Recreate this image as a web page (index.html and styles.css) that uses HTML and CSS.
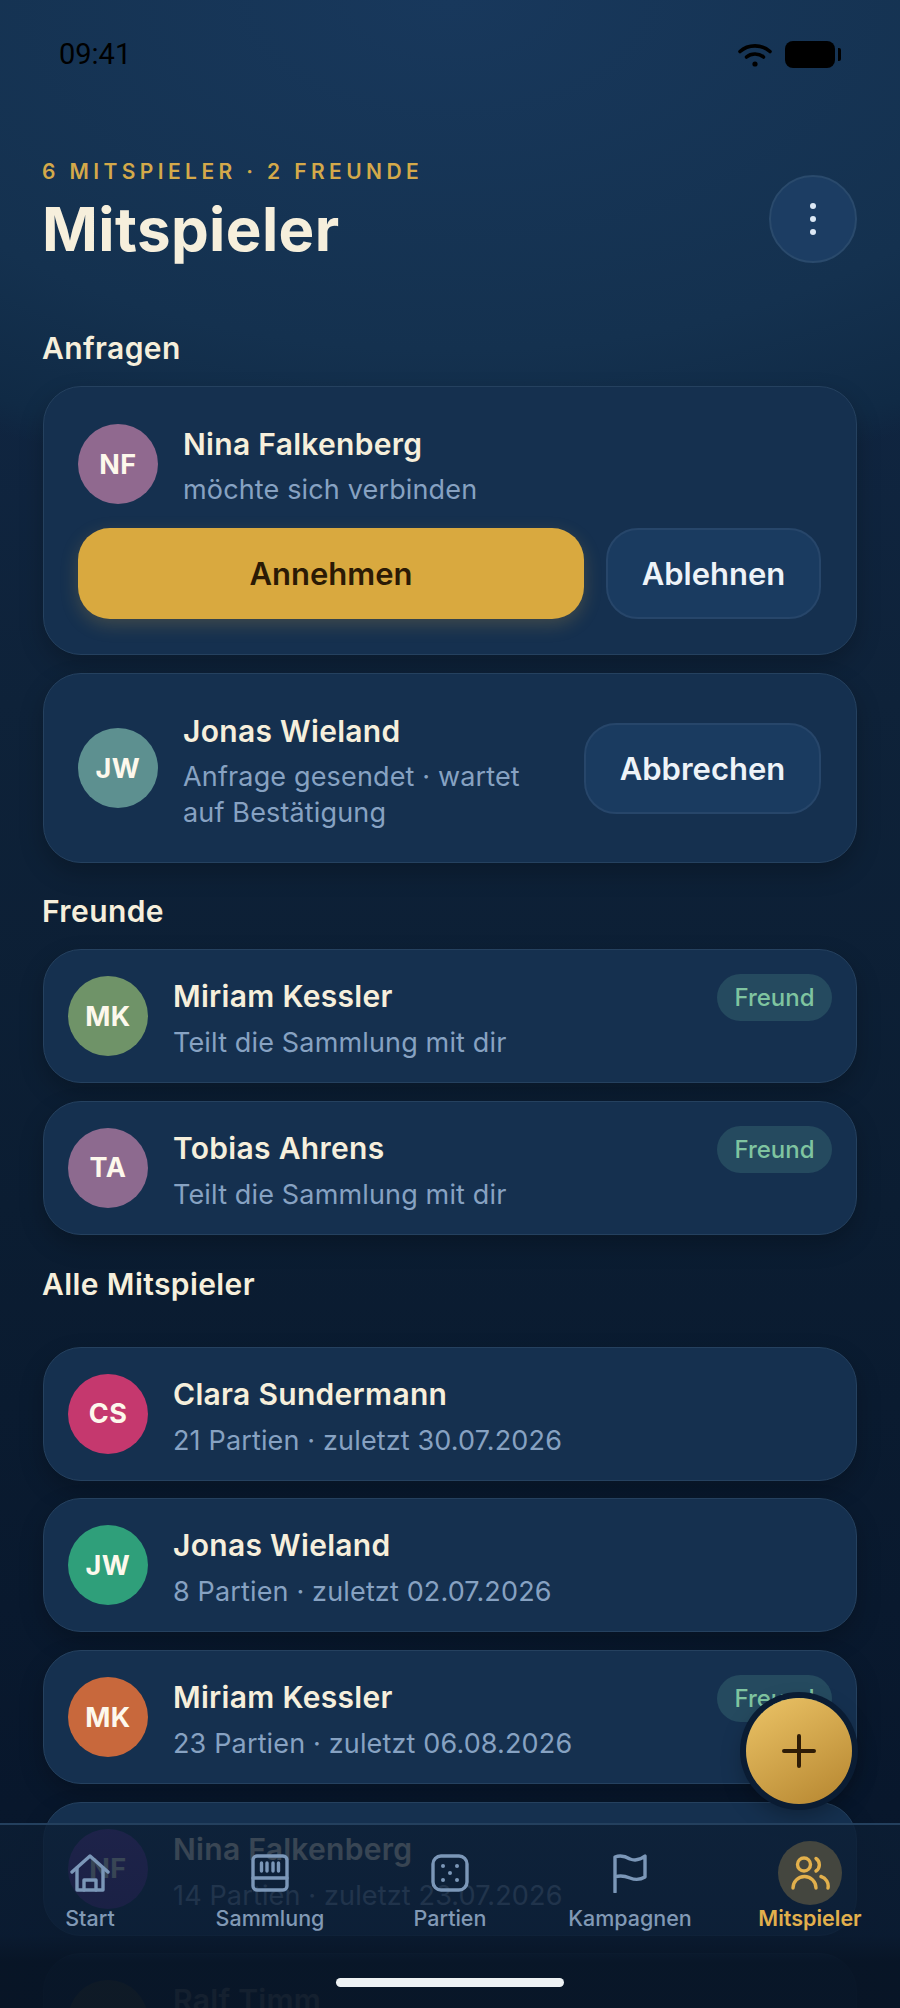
FILE: index.html
```html
<!DOCTYPE html>
<html lang="de">
<head>
  <meta charset="UTF-8" />
  <title>Mitspieler</title>
  <link rel="stylesheet" href="styles.css">
</head>
<body>
  <div class="statusbar">
    <span class="clock">09:41</span>
    <div class="status-icons">
      <svg class="wifi" viewBox="0 0 34 24" fill="none" stroke="#000" stroke-width="3.6" stroke-linecap="round">
        <path d="M2 8.5C10 1 24 1 32 8.5" />
        <path d="M8.5 14C13 10 21 10 25.5 14" />
        <circle cx="17" cy="21" r="2.6" fill="#000" stroke="none" />
      </svg>
      <div class="battery"></div>
      <div class="battery-nub"></div>
    </div>
  </div>

  <header class="top">
    <div>
      <div class="eyebrow">6 MITSPIELER · 2 FREUNDE</div>
      <h1>Mitspieler</h1>
    </div>
    <button class="menu-btn"><i></i><i></i><i></i></button>
  </header>

  <h2 class="first">Anfragen</h2>

  <div class="card request">
    <div class="request-head">
      <div class="avatar nf">NF</div>
      <div class="info">
        <div class="name">Nina Falkenberg</div>
        <div class="sub">möchte sich verbinden</div>
      </div>
    </div>
    <div class="request-actions">
      <button class="btn primary">Annehmen</button>
      <button class="btn ghost decline">Ablehnen</button>
    </div>
  </div>

  <div class="card pending">
    <div class="avatar jw">JW</div>
    <div class="info">
      <div class="name">Jonas Wieland</div>
      <div class="sub">Anfrage gesendet · wartet<br>auf Bestätigung</div>
    </div>
    <button class="btn ghost cancel">Abbrechen</button>
  </div>

  <h2>Freunde</h2>

  <div class="list">
    <div class="card row">
      <div class="avatar mk">MK</div>
      <div class="info">
        <div class="name">Miriam Kessler</div>
        <div class="sub">Teilt die Sammlung mit dir</div>
      </div>
      <span class="pill">Freund</span>
    </div>
    <div class="card row">
      <div class="avatar ta">TA</div>
      <div class="info">
        <div class="name">Tobias Ahrens</div>
        <div class="sub">Teilt die Sammlung mit dir</div>
      </div>
      <span class="pill">Freund</span>
    </div>
  </div>

  <h2 class="all">Alle Mitspieler</h2>

  <div class="list">
    <div class="card row">
      <div class="avatar cs">CS</div>
      <div class="info">
        <div class="name">Clara Sundermann</div>
        <div class="sub">21 Partien · zuletzt 30.07.2026</div>
      </div>
    </div>
    <div class="card row">
      <div class="avatar jw2">JW</div>
      <div class="info">
        <div class="name">Jonas Wieland</div>
        <div class="sub">8 Partien · zuletzt 02.07.2026</div>
      </div>
    </div>
    <div class="card row">
      <div class="avatar mk2">MK</div>
      <div class="info">
        <div class="name">Miriam Kessler</div>
        <div class="sub">23 Partien · zuletzt 06.08.2026</div>
      </div>
      <span class="pill">Freund</span>
    </div>
    <div class="card row">
      <div class="avatar nf2">NF</div>
      <div class="info">
        <div class="name">Nina Falkenberg</div>
        <div class="sub">14 Partien · zuletzt 23.07.2026</div>
      </div>
    </div>
    <div class="card row">
      <div class="avatar rt">RT</div>
      <div class="info">
        <div class="name">Ralf Timm</div>
        <div class="sub">5 Partien · zuletzt 11.06.2026</div>
      </div>
    </div>
  </div>

  <button class="fab">
    <svg viewBox="0 0 34 34" width="34" height="34" fill="none" stroke="#2e1c06" stroke-width="4" stroke-linecap="round">
      <path d="M2 17H32M17 2V32" />
    </svg>
  </button>

  <nav class="tabbar">
    <div class="tab">
      <div class="tab-icon">
        <svg viewBox="0 0 40 40" width="40" height="40" fill="none" stroke="currentColor" stroke-width="3.4" stroke-linejoin="round" stroke-linecap="round">
          <path d="M2 19L20 3L38 19" />
          <path d="M7 15V37H33V15" />
          <path d="M14 37V27H26V37" />
        </svg>
      </div>
      <span>Start</span>
    </div>
    <div class="tab">
      <div class="tab-icon">
        <svg viewBox="0 0 40 40" width="40" height="40" fill="none" stroke="currentColor" stroke-width="3.4" stroke-linecap="round">
          <rect x="3" y="3" width="34" height="34" rx="4" />
          <path d="M3 25H37" />
          <path d="M11.5 10V18M17 10V18M23 10V18M28.5 10V18" />
        </svg>
      </div>
      <span>Sammlung</span>
    </div>
    <div class="tab">
      <div class="tab-icon">
        <svg viewBox="0 0 40 40" width="40" height="40" fill="none" stroke="currentColor" stroke-width="3.4">
          <rect x="3" y="3" width="34" height="34" rx="8" />
          <g fill="currentColor" stroke="none">
            <circle cx="13" cy="13" r="2" />
            <circle cx="27" cy="13" r="2" />
            <circle cx="20" cy="20" r="2" />
            <circle cx="13" cy="27" r="2" />
            <circle cx="27" cy="27" r="2" />
          </g>
        </svg>
      </div>
      <span>Partien</span>
    </div>
    <div class="tab">
      <div class="tab-icon">
        <svg viewBox="0 0 40 40" width="40" height="40" fill="none" stroke="currentColor" stroke-width="3.4" stroke-linejoin="round" stroke-linecap="round">
          <path d="M5 39V4C10 2 15 3 20 6C25 8 30 7 35 3V24C30 27 25 27 20 25C15 23 10 22 5 24" />
        </svg>
      </div>
      <span>Kampagnen</span>
    </div>
    <div class="tab active">
      <div class="tab-icon">
        <svg viewBox="0 0 40 34" width="40" height="34" fill="none" stroke="currentColor" stroke-width="3.4" stroke-linecap="round">
          <circle cx="14" cy="8.5" r="6.5" />
          <path d="M26 2.5A7.5 7.5 0 0 1 26 15" />
          <path d="M3 32A11.5 11.5 0 0 1 26 32" />
          <path d="M31 20.5A10 10 0 0 1 38 32" />
        </svg>
      </div>
      <span>Mitspieler</span>
    </div>
  </nav>

  <div class="home-bar"></div>
</body>
</html>
```

FILE: styles.css
```css
html, body { margin: 0; height: 2008px; overflow: hidden; }
body {
  position: relative;
  width: 900px;
  font-family: "Inter", "Noto Sans", sans-serif;
  color: #f6efdc;
  background:
    radial-gradient(ellipse 900px 500px at 50% 0, #18385c 0, #14314f 70%, #102a45 94%, transparent 100%),
    linear-gradient(#12294a 0, #0e2239 35%, #0b1d32 60%, #07152a 100%);
}
button { font-family: inherit; border: none; padding: 0; }

.statusbar { height: 110px; padding: 0 59px 0 59px; box-sizing: border-box; display: flex; justify-content: space-between; align-items: flex-start; color: #000; }
.clock { font-family: "Roboto", sans-serif; font-size: 29px; line-height: 28px; margin-top: 40px; }
.status-icons { display: flex; align-items: center; margin-top: 41px; }
.wifi { width: 34px; height: 24px; margin-right: 13px; }
.battery { width: 50px; height: 27px; background: #000; border-radius: 8px; }
.battery-nub { width: 3px; height: 13px; background: #000; border-radius: 0 2px 2px 0; margin-left: 3px; }

.top { display: flex; justify-content: space-between; padding: 50px 43px 0 42px; }
.eyebrow { font-size: 21px; line-height: 24px; font-weight: 600; letter-spacing: 4.4px; color: #d4a94a; }
h1 { margin: 10px 0 0; font-size: 60px; line-height: 70px; font-weight: 700; letter-spacing: .4px; color: #f6efdc; }
.menu-btn { width: 88px; height: 88px; margin-top: 15px; border-radius: 50%; background: #1c3d63; border: 2px solid #2a4a6c; box-sizing: border-box; display: flex; flex-direction: column; align-items: center; justify-content: center; gap: 7px; }
.menu-btn i { display: block; width: 6px; height: 6px; border-radius: 50%; background: #dce8f5; }

h2 { margin: 28px 43px 0 42px; font-size: 30px; line-height: 36px; font-weight: 600; letter-spacing: .4px; color: #f6efdc; }
h2.first { margin-top: 66px; margin-bottom: 20px; }
h2.all { margin-top: 31px; margin-bottom: 45px; }

.card { margin: 0 43px; background: #15304f; border: 1px solid #25415f; border-radius: 38px; box-shadow: 0 10px 24px rgba(0, 0, 0, .22); box-sizing: border-box; }
.request { height: 269px; padding: 37px 35px 35px 34px; margin-bottom: 18px; }
.request-head { height: 80px; display: flex; align-items: center; gap: 25px; }
.request-head .info { padding-top: 4px; }
.request-actions { display: flex; gap: 22px; margin-top: 24px; }
.pending { height: 190px; padding: 0 35px 0 34px; display: flex; align-items: center; gap: 25px; margin-bottom: 30px; }
.pending .info { flex: 1; padding-top: 5px; }

.list { display: flex; flex-direction: column; gap: 17.7px; margin-top: 20px; }
h2.all + .list { margin-top: 0; }
.row { height: 134px; padding: 0 24px; display: flex; align-items: center; gap: 25px; position: relative; }
.row .info { flex: 1; padding-top: 5px; }
.row .sub { margin-top: 9px; }

.avatar { flex: none; width: 80px; height: 80px; border-radius: 50%; display: flex; align-items: center; justify-content: center; font-size: 27px; font-weight: 700; letter-spacing: .5px; color: #fdf8ec; }
.nf { background: #90698f; }
.jw { background: #5d9090; }
.mk { background: #6f9368; }
.ta { background: #8d6a8f; }
.cs { background: #c5386e; }
.jw2 { background: #2f9f7a; }
.mk2 { background: #c8683c; }
.nf2 { background: #6436a0; }
.rt { background: #8a7a30; }

.name { font-size: 30px; line-height: 40px; font-weight: 600; letter-spacing: .3px; color: #f6efdc; }
.sub { margin-top: 8px; font-size: 27px; line-height: 36px; letter-spacing: .15px; color: #87a2c2; }

.btn { height: 91px; border-radius: 32px; font-size: 31px; font-weight: 600; box-sizing: border-box; }
.primary { flex: 1; background: #d9a93f; color: #2b1a05; box-shadow: 0 6px 18px rgba(217, 169, 63, .22); }
.ghost { background: #1a3b60; border: 2px solid #27466a; color: #eef3f8; }
.decline { width: 215px; }
.cancel { width: 237px; flex: none; }

.pill { align-self: flex-start; margin-top: 24px; width: 115px; height: 47px; line-height: 47px; text-align: center; border-radius: 24px; background: #254a5f; color: #7fc4a0; font-size: 24px; font-weight: 500; }

.fab { position: absolute; left: 746px; top: 1698px; width: 106px; height: 106px; border-radius: 50%; background: linear-gradient(150deg, #ecc467, #b5852f); box-shadow: 0 0 0 6px #0a1c33, 0 10px 24px rgba(0, 0, 0, .35); display: flex; align-items: center; justify-content: center; }

.tabbar { position: absolute; left: 0; right: 0; top: 1823px; height: 185px; box-sizing: border-box; display: grid; grid-template-columns: repeat(5, 180px); padding-top: 16px; border-top: 2px solid #24405e; background: linear-gradient(rgba(12, 30, 52, .8) 0, rgba(11, 28, 50, .84) 60%, rgba(8, 21, 38, .95) 75%); }
.tab { display: flex; flex-direction: column; align-items: center; color: #7b97b8; font-size: 21.5px; font-weight: 500; }
.tab-icon { width: 64px; height: 64px; border-radius: 50%; display: flex; align-items: center; justify-content: center; margin-bottom: -2px; }
.tab span { line-height: 30px; color: #8199b5; }
.active { color: #e2b04c; }
.active .tab-icon { background: #44463f; }
.active span { color: #e2b04c; font-weight: 600; }

.home-bar { position: absolute; left: 336px; top: 1978px; width: 228px; height: 9px; border-radius: 5px; background: #eef2f4; }
```
